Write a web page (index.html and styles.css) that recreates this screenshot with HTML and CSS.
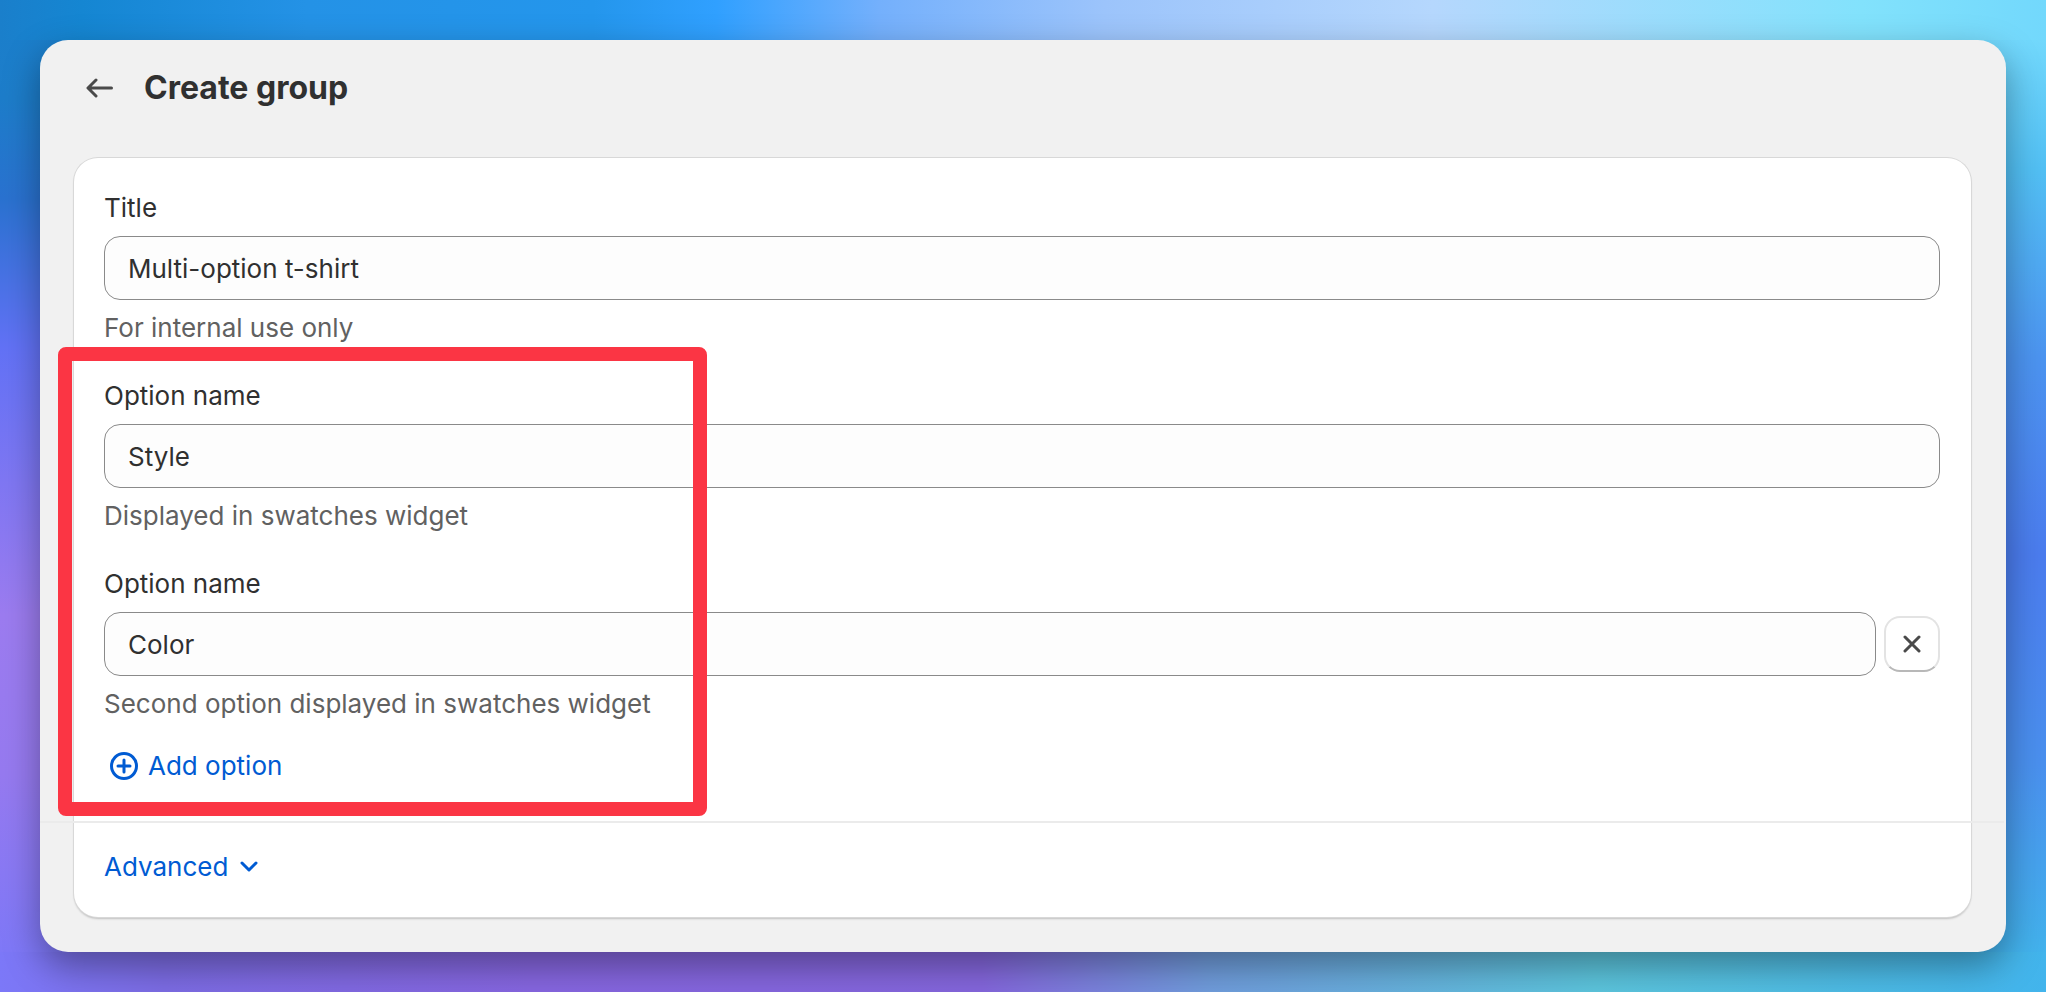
FILE: index.html
```html
<!DOCTYPE html>
<html lang="en">
<head>
<meta charset="utf-8">
<meta name="viewport" content="width=device-width, initial-scale=1">
<title>Create group</title>
<link rel="stylesheet" href="styles.css">
</head>
<body>
<main class="panel">
  <header class="page-header">
    <button class="back" type="button" aria-label="Back">
      <svg viewBox="0 0 28 22" width="28" height="22" aria-hidden="true"><path d="M25.500 11H2.500M10 3L2 11l8 8"/></svg>
    </button>
    <h1 class="page-title">Create group</h1>
  </header>
  <form class="card">
    <div class="field">
      <label class="label" for="title">Title</label>
      <input class="input" id="title" type="text" value="Multi-option t-shirt">
      <p class="help">For internal use only</p>
    </div>
    <section class="options">
      <div class="field">
        <label class="label" for="option-1">Option name</label>
        <input class="input" id="option-1" type="text" value="Style">
        <p class="help">Displayed in swatches widget</p>
      </div>
      <div class="field">
        <label class="label" for="option-2">Option name</label>
        <div class="input-row">
          <input class="input" id="option-2" type="text" value="Color">
          <button class="remove" type="button" aria-label="Remove option">
            <svg viewBox="0 0 18 18" width="18" height="18" aria-hidden="true"><path d="M2 2l14 14M16 2L2 16"/></svg>
          </button>
        </div>
        <p class="help">Second option displayed in swatches widget</p>
      </div>
      <button class="link add" type="button">
        <svg viewBox="0 0 28 28" width="28" height="28" aria-hidden="true"><circle cx="14" cy="14" r="12.500"/><path d="M14 8v12M8 14h12"/></svg>
        <span>Add option</span>
      </button>
      <div class="highlight"></div>
    </section>
    <hr class="divider">
    <button class="link advanced" type="button">
      <span>Advanced</span>
      <svg viewBox="0 0 18 12" width="18" height="12" aria-hidden="true"><path d="M2 2l7 7 7-7"/></svg>
    </button>
  </form>
</main>
</body>
</html>
```
FILE: styles.css
```css
* {
  box-sizing: border-box;
}

body {
  margin: 0;
  min-height: 100vh;
  padding: 40px;
  font-family: Inter, "Liberation Sans", sans-serif;
  font-size: 26px;
  line-height: 40px;
  color: #303030;
  background:
    linear-gradient(90deg, #1a7fcb 0%, #1586d2 4%, #2492e6 15%, #2496ec 29%, #30a0ff 35%, #74b0fc 43%, #9cc4fb 54%, #b5d7fd 70%, #82e2fc 91%, #72d8fc 100%) 0 0 / 100% 40px no-repeat,
    linear-gradient(90deg, #7c78f8 0%, #7c6ce4 8%, #8666e0 26%, #8466dc 48%, #709cdc 59%, #5cc5dd 78%, #42b4ec 100%) 0 100% / 100% 40px no-repeat,
    linear-gradient(180deg, #1a7fcb 0%, #1d7dca 10%, #2a72d0 20%, #6272f6 35%, #9c7cf0 62%, #967af0 78%, #7c78f8 98%) 0 0 / 50% 100% no-repeat,
    linear-gradient(180deg, #76dafc 0%, #72d8fc 4%, #52c0f4 17%, #4c94f0 36%, #4b7cee 56%, #4a90ee 77%, #42b4ec 97%) 100% 0 / 50% 100% no-repeat;
}

.panel {
  padding: 28px 35px 35px 34px;
  border-radius: 28px;
  background: #f1f1f1;
  box-shadow: 0 14px 36px rgba(0, 0, 0, 0.36);
}

.page-header {
  display: flex;
  align-items: center;
  gap: 30px;
  padding-left: 12px;
  margin-bottom: 50px;
}

.page-title {
  margin: 0;
  font-size: 32px;
  font-weight: 700;
  line-height: 40px;
}

button {
  padding: 0;
  border: 0;
  background: none;
  font: inherit;
  cursor: pointer;
}

svg {
  display: block;
  fill: none;
  stroke: currentColor;
  stroke-width: 3;
  stroke-linecap: round;
  stroke-linejoin: round;
}

.back,
.remove {
  color: #4a4a4a;
}

.card {
  padding: 30px 31px 30px 30px;
  border-radius: 24px;
  background: #fff;
  box-shadow: 0 0 0 1px #d8d8d8, 0 2px 2px #c0c0c0;
}

.field {
  display: flex;
  flex-direction: column;
  gap: 8px;
  margin-bottom: 28px;
}

.input {
  width: 100%;
  height: 64px;
  padding: 0 23px;
  border: 1px solid #8a8a8a;
  border-radius: 16px;
  background: #fdfdfd;
  color: inherit;
  font: inherit;
}

.input-row {
  display: flex;
  align-items: center;
  gap: 8px;
}

.remove {
  display: grid;
  place-items: center;
  flex: none;
  width: 56px;
  height: 56px;
  border: 2px solid #e3e3e3;
  border-bottom-color: #b8b8b8;
  border-radius: 16px;
}

.help {
  margin: 0;
  color: #616161;
}

.options {
  position: relative;
}

.link {
  display: flex;
  align-items: center;
  gap: 10px;
  color: #005bd3;
}

.add {
  margin: -6px 0 0 6px;
}

.advanced {
  gap: 12px;
}

.highlight {
  position: absolute;
  top: -29px;
  left: -46px;
  width: 649px;
  height: 469px;
  border: 14px solid #fb3544;
  border-radius: 8px;
  pointer-events: none;
}

.divider {
  margin: 35px -64px 24px;
  border: 0;
  border-top: 2px solid #ebebeb;
}
```
